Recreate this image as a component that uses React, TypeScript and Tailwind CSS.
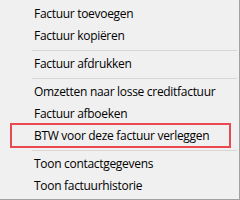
import React from "react";

type Entry = { label: string } | { sep: true };

const entries: Entry[] = [
  { label: "Factuur toevoegen" },
  { label: "Factuur kopiëren" },
  { sep: true },
  { label: "Factuur afdrukken" },
  { sep: true },
  { label: "Omzetten naar losse creditfactuur" },
  { label: "Factuur afboeken" },
  { label: "BTW voor deze factuur verleggen" },
  { sep: true },
  { label: "Toon contactgegevens" },
  { label: "Toon factuurhistorie" },
];

export default function App() {
  return (
    <div
      className="relative w-[240px] h-[200px] bg-[#f0f0f0] border-r border-b border-[#a0a0a0] pt-[3px] overflow-hidden"
      style={{ fontFamily: '"Open Sans", "Noto Sans", sans-serif' }}
    >
      <div className="flex flex-col">
        {entries.map((e, i) =>
          "sep" in e ? (
            <div key={i} className="h-[6px] flex items-center pl-[32px] pr-[2px]">
              <div className="h-px w-full bg-[#d7d7d7]" />
            </div>
          ) : (
            <div
              key={i}
              className="h-[22px] flex items-center pl-[34px] text-[12px] tracking-[-0.3px] text-black leading-none whitespace-nowrap"
            >
              {e.label}
            </div>
          )
        )}
      </div>
      <div className="absolute left-[10px] top-[123px] w-[221px] h-[25px] border-2 border-[#e84a4f]" />
    </div>
  );
}
